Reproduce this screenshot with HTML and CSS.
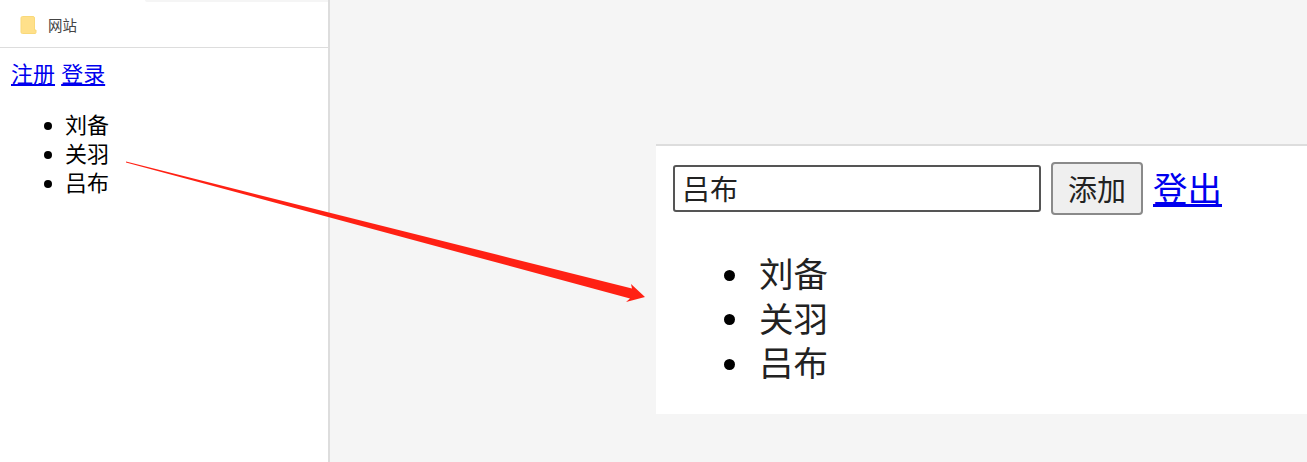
FILE: index.html
```html
<!DOCTYPE html>
<html lang="zh">
<head>
  <meta charset="UTF-8" />
  <title>网站</title>
  <link rel="stylesheet" href="styles.css">
</head>
<body>
  <div class="sidebar">
    <div class="tab-strip"></div>
    <div class="tab">
      <svg class="tab-icon" width="18" height="18" viewBox="0 0 18 18">
        <path d="M3.5 0.5H14a1.5 1.5 0 0 1 1.5 1.5V14H17v2.5a1 1 0 0 1-1 1H3.5a1.5 1.5 0 0 1-1.5-1.5V2A1.5 1.5 0 0 1 3.5 0.5z" fill="#ffe08a" stroke="#f9d97a" stroke-width="1"/>
      </svg>
      <span class="tab-title">网站</span>
    </div>
    <p class="links"><a href="#">注册</a> <a href="#">登录</a></p>
    <ul class="names">
      <li>刘备</li>
      <li>关羽</li>
      <li>吕布</li>
    </ul>
  </div>

  <div class="main">
    <div class="panel">
      <form class="add-form">
        <input class="name-input" type="text" value="吕布">
        <button class="add-btn" type="button">添加</button>
        <a class="logout" href="#">登出</a>
      </form>
      <ul class="names names-big">
        <li>刘备</li>
        <li>关羽</li>
        <li>吕布</li>
      </ul>
    </div>
  </div>

  <svg class="arrow" width="1307" height="462" viewBox="0 0 1307 462">
    <polygon points="126,161.5 632,288.5 631,284 645,297 626,302 630,298.5 126,162.5" fill="#ff2114"/>
  </svg>
</body>
</html>
```

FILE: styles.css
```css
* {
  box-sizing: border-box;
}

html, body {
  height: 100%;
}

body {
  margin: 0;
  display: flex;
  overflow: hidden;
  background-color: #f5f5f5;
  color: #000;
  font-family: "Liberation Sans", "Noto Sans CJK SC", sans-serif;
}

a {
  color: #00e;
}

.sidebar {
  width: 330px;
  flex-shrink: 0;
  background-color: #fff;
  border-right: 2px solid #ddd;
}

.tab-strip {
  height: 2px;
  margin-left: 145px;
  border-bottom-left-radius: 6px;
  background-color: #f5f5f5;
}

.tab {
  display: flex;
  align-items: center;
  height: 46px;
  padding-left: 19px;
  border-bottom: 1px solid #ddd;
}

.tab-icon {
  margin-right: 11px;
}

.tab-title {
  font-size: 14.5px;
  color: #444;
}

.links {
  margin: 12px 0 0;
  padding-left: 11px;
  font-size: 22px;
  line-height: 29px;
}

.names {
  margin: 22px 0 0;
  padding-left: 44px;
  list-style: none;
  font-size: 22px;
  line-height: 29px;
}

.names li {
  display: flex;
  align-items: center;
}

/* bullet drawn by hand, the default disc is too small here */
.names li::before {
  content: "";
  width: 8px;
  height: 8px;
  margin-right: 13px;
  border-radius: 50%;
  background-color: #000;
}

.main {
  flex: 1;
  padding: 144px 0 48px 326px;
}

.panel {
  height: 270px;
  padding: 16px 0 0 17px;
  background-color: #fff;
  border-top: 2px solid #ddd;
}

.add-form {
  display: flex;
  align-items: center;
  height: 53px;
}

.name-input {
  width: 368px;
  height: 47px;
  padding: 0 6px 2px 7px;
  border: 2px solid #555;
  border-radius: 3px;
  font-family: inherit;
  font-size: 28px;
  color: #222;
  background-color: #fff;
}

.add-btn {
  width: 92px;
  height: 53px;
  margin-left: 10px;
  padding: 0 0 2px;
  border: 2px solid #8a8a8a;
  border-radius: 4px;
  background-color: #efefef;
  font-family: inherit;
  font-size: 29px;
  color: #222;
}

.logout {
  margin: 0 0 4px 10px;
  font-size: 34.5px;
}

.names-big {
  margin-top: 38px;
  padding-left: 51px;
  font-size: 34.5px;
  line-height: 44.5px;
  color: #222;
}

.names-big li::before {
  width: 11px;
  height: 11px;
  margin-right: 24px;
}

.arrow {
  position: absolute;
  top: 0;
  left: 0;
  pointer-events: none;
}
```
